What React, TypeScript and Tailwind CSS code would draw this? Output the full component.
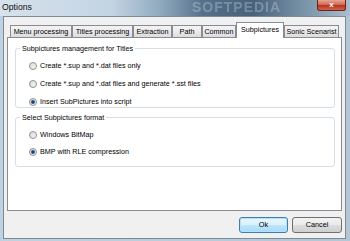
// Options dialog (Windows 7 style) with the Subpictures tab open
const font = "font-['Liberation_Sans',Arial,sans-serif]"

const tabs = [
  { label: 'Menu processing', w: 'w-[62px]' },
  { label: 'Titles processing', w: 'w-[61px]' },
  { label: 'Extraction', w: 'w-[39px]' },
  { label: 'Path', w: 'w-[30px]' },
  { label: 'Common', w: 'w-[34px]' },
  { label: 'Subpictures', w: 'w-[48px]', active: true },
  { label: 'Sonic Scenarist', w: 'w-[55px]' },
]

function Radio({ checked, label }: { checked?: boolean; label: string }) {
  return (
    <div className="flex items-center h-[10px] gap-[3px]">
      <span className="w-[8px] h-[8px] rounded-full border border-[#8e8f8f] bg-[linear-gradient(135deg,#d9d9d9,#f7f7f7)] flex items-center justify-center">
        {checked && (
          <span className="w-[4px] h-[4px] rounded-full bg-[radial-gradient(circle,#1b3f78_30%,#3d7ac0_100%)]" />
        )}
      </span>
      <span className="text-[7.2px] leading-[10px] text-black">{label}</span>
    </div>
  )
}

function Group({ title, children, className }: { title: string; children: React.ReactNode; className: string }) {
  return (
    <fieldset className={`border border-[#d5dfe5] rounded-[3px] ${className}`}>
      <legend className="ml-[4px] px-[2px] text-[7.2px] leading-[9px] text-black">{title}</legend>
      <div className="flex flex-col pl-[13px]">{children}</div>
    </fieldset>
  )
}

export default function App() {
  return (
    <div className={`w-[350px] h-[241px] flex flex-col bg-[linear-gradient(90deg,#bfd2e2,#b3c6d6)] overflow-hidden ${font}`}>
      {/* title bar */}
      <div className="relative h-[16px] flex items-start justify-between bg-[linear-gradient(90deg,#d6e2ec_0%,#c3d4e3_32%,#8fa9be_46%,#55708a_58%,#47617a_72%,#7690a6_86%,#a9bdcd_100%)]">
        <span className="ml-[2px] mt-[2px] text-[8.7px] leading-[10px] text-[#111]">Options</span>
        <span className="absolute left-[192px] top-0 text-[14px] leading-[14px] font-bold tracking-[1px] text-white/25 blur-[0.7px] select-none">
          SOFTPEDIA
        </span>
        <button className="relative mr-[4px] w-[29px] h-[11px] rounded-b-[3px] border border-t-0 border-[#6b2418] bg-[linear-gradient(180deg,#e8a595_0%,#d46a55_45%,#b8351f_55%,#d2634c_100%)] flex items-center justify-center">
          <span className="text-white text-[8px] font-bold leading-none">x</span>
        </button>
      </div>

      {/* client area */}
      <div className="ml-[3px] mr-[4px] h-[223px] border border-[#7c8a96] bg-[#f0f0f0] flex flex-col px-[3px] pt-[5px] pb-[5px]">
        <div className="flex items-end h-[15px] pl-[3px]">
          {tabs.map((t) =>
            t.active ? (
              <div
                key={t.label}
                className={`${t.w} h-[16px] -mb-px relative z-10 bg-white border border-b-0 border-[#898c95] flex items-start justify-center pt-[2px] text-[7.2px] leading-[10px] text-black`}
              >
                {t.label}
              </div>
            ) : (
              <div
                key={t.label}
                className={`${t.w} h-[12px] border border-b-0 border-[#898c95] bg-[linear-gradient(180deg,#f3f3f3_0%,#ebebeb_50%,#dcdcdc_100%)] flex items-center justify-center text-[7.2px] leading-[10px] text-black`}
              >
                {t.label}
              </div>
            ),
          )}
        </div>

        <div className="h-[174px] border border-[#898c95] bg-white pl-[7px] pr-[6px]">
          <Group title="Subpictures management for Titles" className="mt-[6px] pt-[8px] pb-0">
            <div className="flex flex-col gap-[8px]">
              <Radio label="Create *.sup and *.dat files only" />
              <Radio label="Create *.sup and *.dat files and generate *.sst files" />
              <Radio checked label="Insert SubPictures into script" />
            </div>
          </Group>
          <Group title="Select Subpictures format" className="mt-[5px] pt-[8px] pb-[9px]">
            <div className="flex flex-col gap-[7px]">
              <Radio label="Windows BitMap" />
              <Radio checked label="BMP with RLE compression" />
            </div>
          </Group>
        </div>

        <div className="flex justify-end gap-[4px] mt-[6px]">
          <button className="w-[49px] h-[16px] rounded-[3px] border border-[#3c7fb1] bg-[linear-gradient(180deg,#eaf6fd_0%,#d9f0fc_50%,#bee6fd_51%,#a7d9f5_100%)] shadow-[inset_0_0_0_1px_#b5e2fa] text-[7.3px] leading-none text-black">
            Ok
          </button>
          <button className="w-[50px] h-[16px] rounded-[3px] border border-[#707070] bg-[linear-gradient(180deg,#f2f2f2_0%,#ebebeb_50%,#dddddd_51%,#cfcfcf_100%)] text-[7.3px] leading-none text-black">
            Cancel
          </button>
        </div>
      </div>
    </div>
  )
}
